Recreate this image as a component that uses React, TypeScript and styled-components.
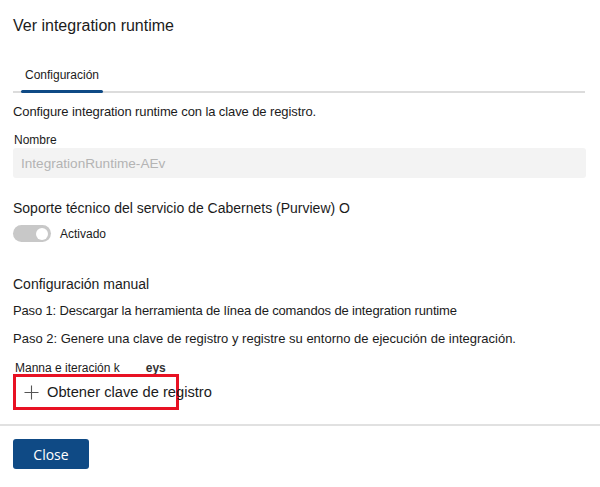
import { createGlobalStyle } from "styled-components";
import styled from "styled-components";

const GlobalStyle = createGlobalStyle`
  html, body {
    margin: 0;
    padding: 0;
    background: #ffffff;
    font-family: "Liberation Sans", Arial, sans-serif;
    color: #1b1b1b;
  }
`;

const Panel = styled.div`
  width: 600px;
  height: 487px;
  display: flex;
  flex-direction: column;
  background: #ffffff;
  overflow: hidden;
`;

const Body = styled.div`
  padding: 0 15px 0 13px;
  display: flex;
  flex-direction: column;
`;

const Title = styled.h1`
  margin: 16px 0 0;
  font-size: 16px;
  font-weight: 400;
  line-height: 20px;
  color: #1b1b1b;
`;

const TabBar = styled.div`
  margin-top: 31px;
  display: flex;
  border-bottom: 2px solid #dcdcdc;
`;

const Tab = styled.div<{ $active?: boolean }>`
  margin-left: 8px;
  padding: 0 4px 8px;
  font-size: 12px;
  line-height: 16px;
  color: #1b1b1b;
  position: relative;
  &::after {
    content: "";
    display: ${({ $active }) => ($active ? "block" : "none")};
    position: absolute;
    left: 0;
    right: 0;
    bottom: -2px;
    height: 3px;
    border-radius: 2px;
    background: #0f4a85;
  }
`;

const Text = styled.p<{ $size?: number; $top?: number; $spacing?: number }>`
  margin: ${({ $top }) => $top ?? 0}px 0 0;
  font-size: ${({ $size }) => $size ?? 13}px;
  letter-spacing: ${({ $spacing }) => $spacing ?? 0}px;
  line-height: 16px;
  color: #1b1b1b;
`;

const Label = styled.div`
  margin-top: 13px;
  margin-left: 1px;
  font-size: 12px;
  line-height: 14px;
`;

const Input = styled.div`
  margin-top: 1px;
  width: 573px;
  height: 30px;
  box-sizing: border-box;
  padding: 0 8px;
  display: flex;
  align-items: center;
  background: #f3f3f3;
  border-radius: 3px;
  font-size: 13.6px;
  color: #b4b4b4;
`;

const ToggleRow = styled.div`
  margin-top: 9px;
  display: flex;
  align-items: center;
  gap: 9px;
`;

const Switch = styled.div`
  width: 38px;
  height: 17px;
  border-radius: 9px;
  background: #c8c8c8;
  display: flex;
  align-items: center;
  justify-content: flex-end;
  padding: 0 3px;
  box-sizing: border-box;
  &::after {
    content: "";
    width: 12px;
    height: 12px;
    border-radius: 50%;
    background: #ffffff;
  }
`;

const SwitchLabel = styled.span`
  font-size: 12px;
  color: #1b1b1b;
`;

const KeysRow = styled.div`
  margin-top: 15px;
  margin-left: 2px;
  display: flex;
  font-size: 12px;
  line-height: 12px;
`;

const Keys = styled.span`
  margin-left: 26px;
  font-weight: 700;
  color: #333;
`;

const Highlight = styled.div`
  width: 166px;
  height: 36px;
  box-sizing: border-box;
  border: 3px solid #e81123;
  display: flex;
  align-items: center;
  overflow: visible;
  white-space: nowrap;
  padding-left: 8px;
  gap: 8px;
`;

const PlusIcon = styled.svg`
  flex-shrink: 0;
`;

const AddText = styled.span`
  font-size: 14.7px;
  color: #1b1b1b;
`;

const Footer = styled.div`
  margin-top: 14px;
  border-top: 2px solid #e1e1e1;
  padding: 13px 13px 0;
`;

const CloseButton = styled.button`
  width: 76px;
  height: 30px;
  border: none;
  border-radius: 3px;
  background: #0f4a85;
  color: #ffffff;
  font-family: "Open Sans", "Liberation Sans", sans-serif;
  font-size: 14px;
`;

export default function App() {
  return (
    <Panel>
      <GlobalStyle />
      <Body>
        <Title>Ver integration runtime</Title>
        <TabBar>
          <Tab $active>Configuración</Tab>
        </TabBar>
        <Text $top={11} $spacing={-0.1}>
          Configure integration runtime con la clave de registro.
        </Text>
        <Label>Nombre</Label>
        <Input>IntegrationRuntime-AEv</Input>
        <Text $size={14} $top={22}>
          Soporte técnico del servicio de Cabernets (Purview) O
        </Text>
        <ToggleRow>
          <Switch />
          <SwitchLabel>Activado</SwitchLabel>
        </ToggleRow>
        <Text $size={14} $top={34}>Configuración manual</Text>
        <Text $top={11} $spacing={-0.15}>
          Paso 1: Descargar la herramienta de línea de comandos de integration runtime
        </Text>
        <Text $top={12}>
          Paso 2: Genere una clave de registro y registre su entorno de ejecución de integración.
        </Text>
        <KeysRow>
          <span>Manna e iteración k</span>
          <Keys>eys</Keys>
        </KeysRow>
        <Highlight>
          <PlusIcon width="15" height="15" viewBox="0 0 15 15">
            <path d="M7.5 0.5v14M0.5 7.5h14" stroke="#555" strokeWidth="1.1" fill="none" />
          </PlusIcon>
          <AddText>Obtener clave de registro</AddText>
        </Highlight>
      </Body>
      <Footer>
        <CloseButton>Close</CloseButton>
      </Footer>
    </Panel>
  );
}
